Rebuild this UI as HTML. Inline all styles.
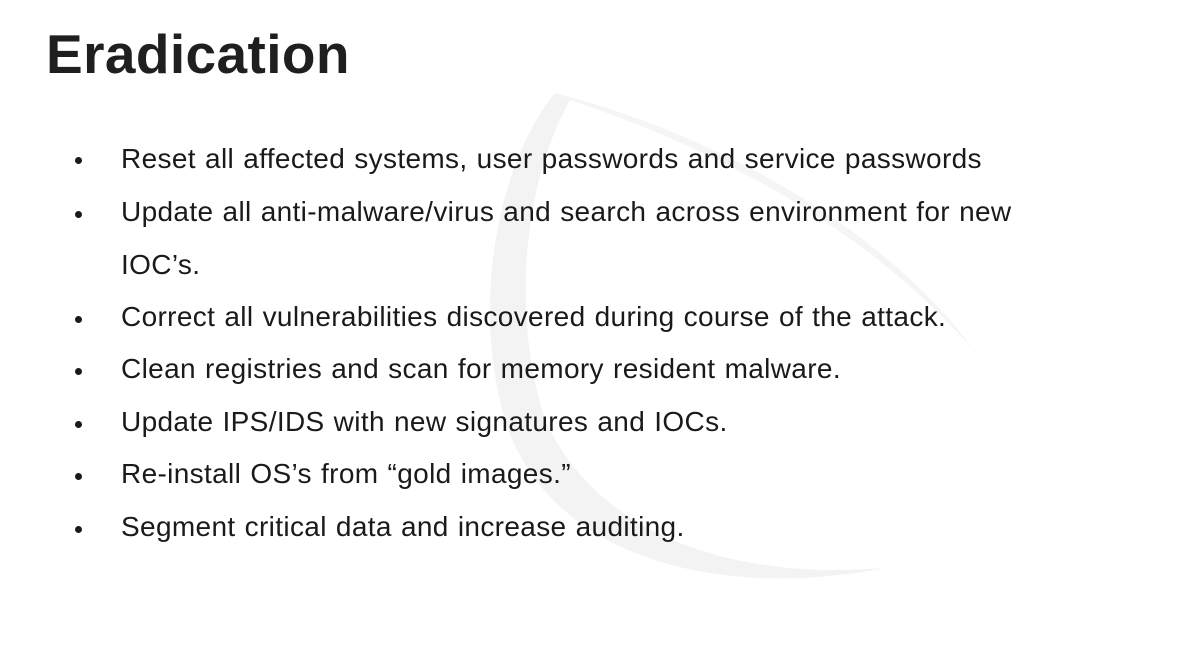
<!DOCTYPE html>
<html><head><meta charset="utf-8"><style>
html,body{margin:0;padding:0;background:#fff;}
body{width:1200px;height:654px;position:relative;overflow:hidden;font-family:"Liberation Sans",Arial,sans-serif;}
h1{position:absolute;left:46px;top:20px;margin:0;font-size:55px;font-weight:bold;color:#1f1f1f;letter-spacing:0.4px;line-height:68px;}
.li{position:absolute;left:121px;font-size:28px;color:#1a1a1a;line-height:30px;white-space:nowrap;letter-spacing:0.35px;word-spacing:1px;}
.d{position:absolute;left:75px;width:7px;height:7px;border-radius:50%;background:#1a1a1a;}
svg{position:absolute;left:0;top:0;}
</style></head><body>
<svg width="1200" height="654">
<path d="M555 93 C 500 160, 470 300, 505 420 C 550 560, 720 600, 885 568 C 740 580, 600 540, 545 420 C 510 310, 525 180, 570 100 Z" fill="#f3f3f3"/>
<path d="M555 93 C 700 130, 880 220, 975 352 C 870 230, 720 150, 570 100 Z" fill="#f5f5f5"/>
</svg>
<h1>Eradication</h1>
<div class="d" style="top:157px"></div><div class="li" style="top:144px">Reset all affected systems, user passwords and service passwords</div>
<div class="d" style="top:211px"></div><div class="li" style="top:197px">Update all anti-malware/virus and search across environment for new</div>
<div class="li" style="top:250px">IOC’s.</div>
<div class="d" style="top:316px"></div><div class="li" style="top:302px">Correct all vulnerabilities discovered during course of the attack.</div>
<div class="d" style="top:368px"></div><div class="li" style="top:354px">Clean registries and scan for memory resident malware.</div>
<div class="d" style="top:421px"></div><div class="li" style="top:407px">Update IPS/IDS with new signatures and IOCs.</div>
<div class="d" style="top:473px"></div><div class="li" style="top:459px">Re-install OS’s from “gold images.”</div>
<div class="d" style="top:526px"></div><div class="li" style="top:512px">Segment critical data and increase auditing.</div>
</body></html>
